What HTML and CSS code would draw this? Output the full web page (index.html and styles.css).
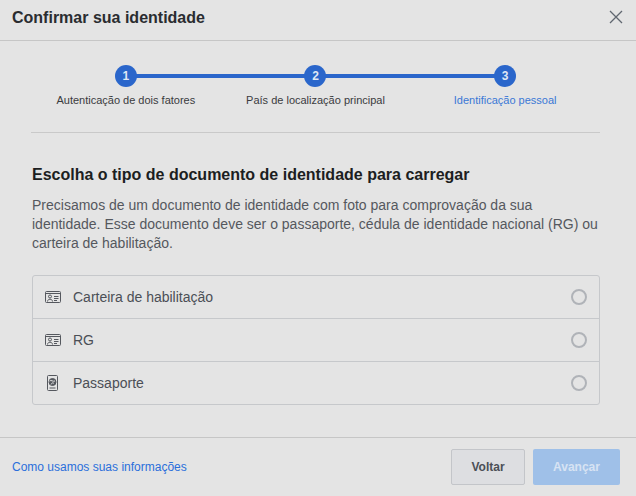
FILE: index.html
```html
<!DOCTYPE html>
<html lang="pt-BR">
<head>
<meta charset="utf-8">
<title>Confirmar sua identidade</title>
<link rel="stylesheet" href="styles.css">
</head>
<body>
<div class="dialog">
  <header class="head">
    <h1 class="title">Confirmar sua identidade</h1>
    <svg class="close" width="14" height="14" viewBox="0 0 14 14"><path d="M1 1l12 12M13 1L1 13" stroke="#606770" stroke-width="1.3" fill="none"/></svg>
  </header>
  <main class="body">
    <div class="steps">
      <div class="step"><span class="dot">1</span><span class="label">Autenticação de dois fatores</span></div>
      <div class="step"><span class="dot">2</span><span class="label">País de localização principal</span></div>
      <div class="step current"><span class="dot">3</span><span class="label">Identificação pessoal</span></div>
    </div>
    <h2 class="heading">Escolha o tipo de documento de identidade para carregar</h2>
    <p class="desc">Precisamos de um documento de identidade com foto para comprovação da sua identidade. Esse documento deve ser o passaporte, cédula de identidade nacional (RG) ou carteira de habilitação.</p>
    <ul class="list">
      <li class="row">
        <svg class="icon" width="16" height="16" viewBox="0 0 16 16" fill="none" stroke="#55585e"><rect x=".5" y="2.500" width="15" height="11" rx="1"/><path d="M1 4.500h14" stroke-width="1"/><circle cx="5" cy="7.500" r="1.500"/><path d="M2.500 12.500c0-3 5-3 5 0M9 7.500h4.500M9 9.500h4.500M9 11.500h3"/></svg>
        <span class="name">Carteira de habilitação</span><span class="radio"></span>
      </li>
      <li class="row">
        <svg class="icon" width="16" height="16" viewBox="0 0 16 16" fill="none" stroke="#55585e"><rect x=".5" y="2.500" width="15" height="11" rx="1"/><path d="M1 4.500h14" stroke-width="1"/><circle cx="5" cy="7.500" r="1.500"/><path d="M2.500 12.500c0-3 5-3 5 0M9 7.500h4.500M9 9.500h4.500M9 11.500h3"/></svg>
        <span class="name">RG</span><span class="radio"></span>
      </li>
      <li class="row">
        <svg class="icon" width="16" height="16" viewBox="0 0 16 16" fill="none" stroke="#55585e"><rect x="2.500" y=".5" width="10" height="15" rx="1"/><circle cx="7.500" cy="7" r="3.500" fill="#55585e"/><path d="M4.500 6c2-1.500 3 1 5.500 0M6 9.500c1-2 2-2 3-1" stroke="#e4e4e4"/><path d="M4.500 13h6"/></svg>
        <span class="name">Passaporte</span><span class="radio"></span>
      </li>
    </ul>
  </main>
  <footer class="foot">
    <a class="link" href="#">Como usamos suas informações</a>
    <div class="actions">
      <button class="btn back" type="button">Voltar</button>
      <button class="btn next" type="button">Avançar</button>
    </div>
  </footer>
</div>
</body>
</html>
```
FILE: styles.css
```css
* { box-sizing: border-box; }
html, body { margin: 0; height: 100%; }
body { background: #e4e4e4; font-family: "Liberation Sans", Arial, sans-serif; color: #1c1e21; overflow: hidden; }
.dialog { width: 636px; height: 496px; display: flex; flex-direction: column; }
.head { height: 41px; border-bottom: 1px solid #c6c6c6; display: flex; align-items: center; justify-content: space-between; padding: 0 13px 6px 12px; flex: none; }
.title { margin: 2px 0 0; font-size: 16px; line-height: 20px; font-weight: bold; color: #2a2c30; }
.close { display: block; }
.body { flex: 1; padding: 24px 36px 0 32px; min-height: 0; }
.steps { display: grid; grid-template-columns: repeat(3, 1fr); margin: 0 0 0 -1px; padding-bottom: 25px; border-bottom: 1px solid #c9c9c9; }
.step { display: flex; flex-direction: column; align-items: center; position: relative; }
.step:not(:last-child)::after { content: ""; position: absolute; top: 9px; left: 50%; width: 100%; height: 4px; background: #2a66cb; }
.dot { width: 22px; height: 22px; border-radius: 50%; background: #2a66cb; color: #dfe7f5; font-size: 12px; font-weight: bold; display: flex; align-items: center; justify-content: center; position: relative; z-index: 1; }
.label { font-size: 11px; line-height: 14px; margin-top: 6px; color: #3a3b3e; white-space: nowrap; }
.current .label { color: #3a78d6; }
.heading { margin: 32px 0 0; font-size: 16px; line-height: 20px; font-weight: bold; color: #1c1e21; }
.desc { margin: 11px 0 0; font-size: 14px; line-height: 19px; color: #55585e; }
.list { list-style: none; margin: 22px 0 0; padding: 0; border: 1px solid #c6c8cb; border-radius: 3px; }
.row { height: 43px; display: flex; align-items: center; padding: 0 12px; border-bottom: 1px solid #c6c8cb; }
.row:last-child { border-bottom: 0; height: 42px; }
.icon { flex: none; display: block; }
.name { flex: 1; margin-left: 12px; font-size: 14px; color: #4b4f56; }
.radio { width: 16px; height: 16px; border: 2px solid #b0b3b8; border-radius: 50%; flex: none; }
.foot { height: 59px; border-top: 1px solid #c6c6c6; display: flex; align-items: center; justify-content: space-between; padding: 0 16px 0 12px; flex: none; }
.link { font-size: 12px; color: #2a6fdb; text-decoration: none; }
.actions { display: flex; gap: 8px; }
.btn { height: 36px; border-radius: 2px; font-family: inherit; font-size: 12px; font-weight: bold; padding: 0; }
.back { width: 74px; background: #dddee1; border: 1px solid #c3c5c9; color: #4b4f56; }
.next { width: 87px; background: #9fc0e8; border: 0; color: #d7e3f3; }
```
